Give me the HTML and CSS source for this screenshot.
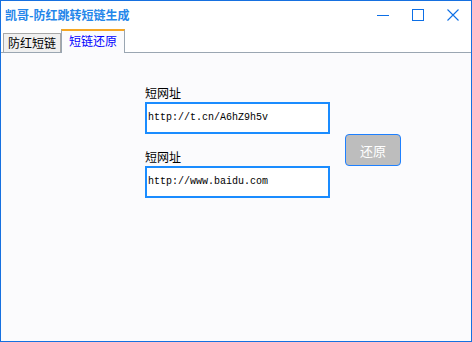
FILE: index.html
```html
<!DOCTYPE html>
<html>
<head>
<meta charset="utf-8">
<link rel="stylesheet" href="styles.css">
</head>
<body>
<div class="window">
  <div class="titlebar">
    <div class="title">凯哥-防红跳转短链生成</div>
    <div class="controls">
      <span class="ctl"><svg width="14" height="14" viewBox="0 0 14 14"><line x1="1" y1="7.5" x2="13" y2="7.5" stroke="#0d6fe6" stroke-width="1"/></svg></span>
      <span class="ctl"><svg width="14" height="14" viewBox="0 0 14 14"><rect x="1.5" y="1.5" width="11" height="11" fill="none" stroke="#0d6fe6" stroke-width="1"/></svg></span>
      <span class="ctl"><svg width="14" height="14" viewBox="0 0 14 14"><path d="M1.5 1.5 L12.5 12.5 M12.5 1.5 L1.5 12.5" stroke="#0d6fe6" stroke-width="1.1"/></svg></span>
    </div>
  </div>
  <div class="tabs">
    <div class="tab">防红短链</div>
    <div class="tab active">短链还原</div>
  </div>
  <div class="content">
    <div class="form">
      <label class="label">短网址</label>
      <div class="input">http://t.cn/A6hZ9h5v</div>
      <label class="label second">短网址</label>
      <div class="input">http://www.baidu.com</div>
    </div>
    <button class="btn">还原</button>
  </div>
</div>
</body>
</html>
```
FILE: styles.css
```css
html, body {
  margin: 0;
  padding: 0;
}
body {
  width: 472px;
  height: 342px;
  font-family: "Noto Sans CJK SC", sans-serif;
}
.window {
  box-sizing: border-box;
  width: 472px;
  height: 342px;
  border: 1px solid #1670e0;
  display: flex;
  flex-direction: column;
  background: #fbfbfd;
}
.titlebar {
  height: 28px;
  background: #ffffff;
  display: flex;
  align-items: center;
  justify-content: space-between;
}
.title {
  margin-left: 4px;
  font-size: 12px;
  font-weight: bold;
  color: #2486ea;
  line-height: 14px;
}
.controls {
  display: flex;
  gap: 21px;
  margin-right: 11px;
  margin-top: -1px;
}
.ctl {
  display: flex;
  width: 14px;
  height: 14px;
}
.tabs {
  height: 23px;
  background: #ffffff;
  display: flex;
  align-items: flex-end;
  padding-left: 2px;
  border-bottom: 1px solid #9aa6b2;
}
.tab {
  box-sizing: border-box;
  height: 19px;
  padding: 0 4px;
  font-size: 12px;
  line-height: 18px;
  color: #000;
  background: #f0f0f0;
  border: 1px solid #a8a8a8;
  border-bottom: none;
}
.tab.active {
  height: 24px;
  margin-bottom: -1px;
  padding: 0 7px;
  background: #fbfbfd;
  color: #0000ff;
  border: 1px solid #9aa6b2;
  border-top: 2px solid #f5a623;
  border-bottom: none;
  line-height: 20px;
}
.content {
  flex: 1;
  display: flex;
  align-items: flex-start;
  padding-left: 144px;
  padding-top: 33px;
}
.form {
  display: flex;
  flex-direction: column;
  width: 185px;
}
.label {
  font-size: 12px;
  line-height: 14px;
  color: #000;
  margin-bottom: 2px;
}
.label.second {
  margin-top: 16px;
}
.input {
  box-sizing: border-box;
  height: 32px;
  border: 2px solid #1a8cff;
  background: #ffffff;
  font-family: "Liberation Mono", monospace;
  font-size: 10px;
  line-height: 28px;
  padding-left: 1px;
  color: #000;
  white-space: nowrap;
}
.btn {
  box-sizing: border-box;
  margin-left: 15px;
  margin-top: 48px;
  width: 56px;
  height: 32px;
  background: #bdbdbd;
  border: 1px solid #1e80ff;
  border-radius: 4px;
  color: #ffffff;
  font-family: "Noto Sans CJK SC", sans-serif;
  font-size: 13px;
  padding: 0;
}
```
